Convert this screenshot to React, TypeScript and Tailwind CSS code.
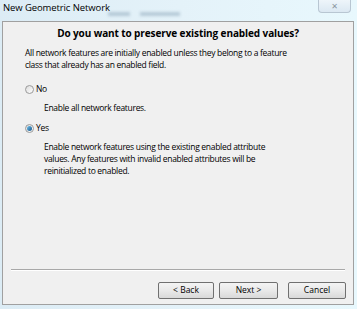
import React from "react";

function Radio({ checked }: { checked?: boolean }) {
  return (
    <span className="w-[9px] h-[9px] rounded-full border border-[#9a9a9a] bg-gradient-to-br from-[#dcdcdc] to-[#ffffff] flex items-center justify-center">
      {checked && (
        <span className="w-[5px] h-[5px] rounded-full bg-gradient-to-br from-[#6cc0ee] to-[#1a5688]" />
      )}
    </span>
  );
}

function Btn({ label, w }: { label: string; w: string }) {
  return (
    <button
      className={`${w} h-[17px] rounded-[2px] border border-[#707070] bg-gradient-to-b from-[#f4f4f4] via-[#e9e9e9] to-[#d9d9d9] text-[8.5px] text-black leading-none`}
    >
      {label}
    </button>
  );
}

export default function App() {
  return (
    <div
      className="w-[357px] h-[309px] bg-gradient-to-r from-[#dcecf5] via-[#e4f2f9] to-[#e8f8fd] flex flex-col overflow-hidden"
      style={{ fontFamily: '"Open Sans", "DejaVu Sans", sans-serif' }}
    >
      {/* Title bar */}
      <div className="h-[21px] shrink-0 relative pl-[3px] pt-[1px]">
        <span className="block text-[9.5px] text-black leading-[13px] tracking-[-0.1px]">
          New Geometric Network
        </span>
        <div className="absolute left-[108px] top-[12px] flex gap-[10px] blur-[1.5px] opacity-50">
          <span className="w-[22px] h-[4px] bg-[#8aa4b8]" />
          <span className="w-[40px] h-[4px] bg-[#8aa4b8]" />
        </div>
        <div className="absolute right-[6px] top-0 w-[33px] h-[13px] rounded-b-[4px] border border-t-0 border-[#b8c6d2] bg-gradient-to-b from-[#eef5fa] to-[#dbe8f2] flex items-center justify-center text-[8px] font-bold text-[#8a96a0] leading-none">
          ✕
        </div>
      </div>

      {/* Body */}
      <div className="ml-[2px] mr-[3px] h-[284px] shrink-0 border border-[#a0a0a0] bg-[#f0f0f0] flex flex-col">
        <div className="mt-[5px] h-[12px] flex justify-center">
          <span className="text-[10px] font-bold text-black leading-[12px] tracking-[-0.1px]">
            Do you want to preserve existing enabled values?
          </span>
        </div>
        <div className="pl-[22px] pr-[6px] mt-[8px] text-[8.5px] leading-[12px] tracking-[-0.3px] text-black whitespace-nowrap">
          <p>All network features are initially enabled unless they belong to a feature</p>
          <p>class that already has an enabled field.</p>

          <div className="flex items-center gap-[2px] mt-[12px] h-[12px]">
            <Radio />
            <span>No</span>
          </div>
          <p className="pl-[19px] mt-[7px]">Enable all network features.</p>

          <div className="flex items-center gap-[2px] mt-[8px] h-[12px]">
            <Radio checked />
            <span>Yes</span>
          </div>
          <div className="pl-[19px] mt-[7px]">
            <p>Enable network features using the existing enabled attribute</p>
            <p>values. Any features with invalid enabled attributes will be</p>
            <p>reinitialized to enabled.</p>
          </div>
        </div>

        <div className="mt-auto mx-[8px] border-t border-[#a8a8a8] border-b border-b-white" />
        <div className="flex justify-end pr-[7px] mt-[11px] mb-[5px]">
          <Btn label="< Back" w="w-[56px]" />
          <div className="w-[5px]" />
          <Btn label="Next >" w="w-[59px]" />
          <div className="w-[10px]" />
          <Btn label="Cancel" w="w-[58px]" />
        </div>
      </div>
    </div>
  );
}
